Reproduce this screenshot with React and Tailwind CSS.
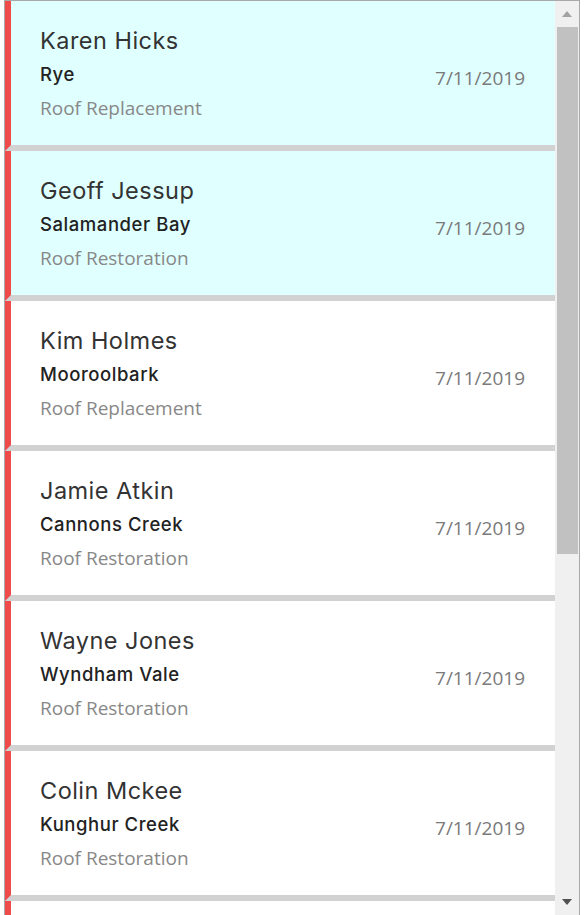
import React from "react";

const jobs = [
  { name: "Karen Hicks", suburb: "Rye", type: "Roof Replacement", date: "7/11/2019", active: true },
  { name: "Geoff Jessup", suburb: "Salamander Bay", type: "Roof Restoration", date: "7/11/2019", active: true },
  { name: "Kim Holmes", suburb: "Mooroolbark", type: "Roof Replacement", date: "7/11/2019" },
  { name: "Jamie Atkin", suburb: "Cannons Creek", type: "Roof Restoration", date: "7/11/2019" },
  { name: "Wayne Jones", suburb: "Wyndham Vale", type: "Roof Restoration", date: "7/11/2019" },
  { name: "Colin Mckee", suburb: "Kunghur Creek", type: "Roof Restoration", date: "7/11/2019" },
];

const heading = { fontFamily: "Inter, 'Noto Sans', sans-serif" };
const body = { fontFamily: "'Open Sans', sans-serif" };

function JobCard({ job }) {
  return (
    <div
      className={
        "h-[150px] shrink-0 border-l-[6px] border-b-[6px] border-l-[#ef4b4b] border-b-[#d2d2d2] flex items-start justify-between pl-[29px] pr-[30px] " +
        (job.active ? "bg-[#e0ffff]" : "bg-white")
      }
    >
      <div className="flex flex-col pt-[24px]">
        <span className="text-[23.5px] leading-[32px] text-[#333] tracking-[0.02em]" style={heading}>
          {job.name}
        </span>
        <span className="text-[18.5px] leading-[34px] text-[#222] font-medium tracking-[0.03em]" style={heading}>
          {job.suburb}
        </span>
        <span className="text-[19px] leading-[34px] text-[#888]" style={body}>
          {job.type}
        </span>
      </div>
      <span className="text-[19px] leading-[26px] text-[#7a7a7a] pt-[64px]" style={body}>
        {job.date}
      </span>
    </div>
  );
}

function Scrollbar() {
  return (
    <div className="w-[24px] shrink-0 bg-[#f0f0f0] flex flex-col items-center">
      <div className="h-[26px] w-full flex items-center justify-center">
        <svg width="10" height="6" viewBox="0 0 10 6">
          <path d="M5 0 L10 6 L0 6 Z" fill="#a3a3a3" />
        </svg>
      </div>
      <div className="w-[21px] h-[527px] bg-[#c1c1c1]" />
      <div className="flex-1" />
      <div className="h-[26px] w-full flex items-center justify-center">
        <svg width="10" height="6" viewBox="0 0 10 6">
          <path d="M0 0 L10 0 L5 6 Z" fill="#505050" />
        </svg>
      </div>
    </div>
  );
}

export default function App() {
  return (
    <div className="w-[586px] h-[915px] bg-white pl-[4px] overflow-hidden">
      <div className="w-[576px] h-[915px] border-l border-t border-r border-[#a9a9a9] flex overflow-hidden">
        <div className="flex-1 flex flex-col overflow-hidden">
          {jobs.map((job, i) => (
            <JobCard key={i} job={job} />
          ))}
          <div className="h-[150px] shrink-0 border-l-[6px] border-l-[#ef4b4b] bg-white" />
        </div>
        <Scrollbar />
      </div>
    </div>
  );
}
